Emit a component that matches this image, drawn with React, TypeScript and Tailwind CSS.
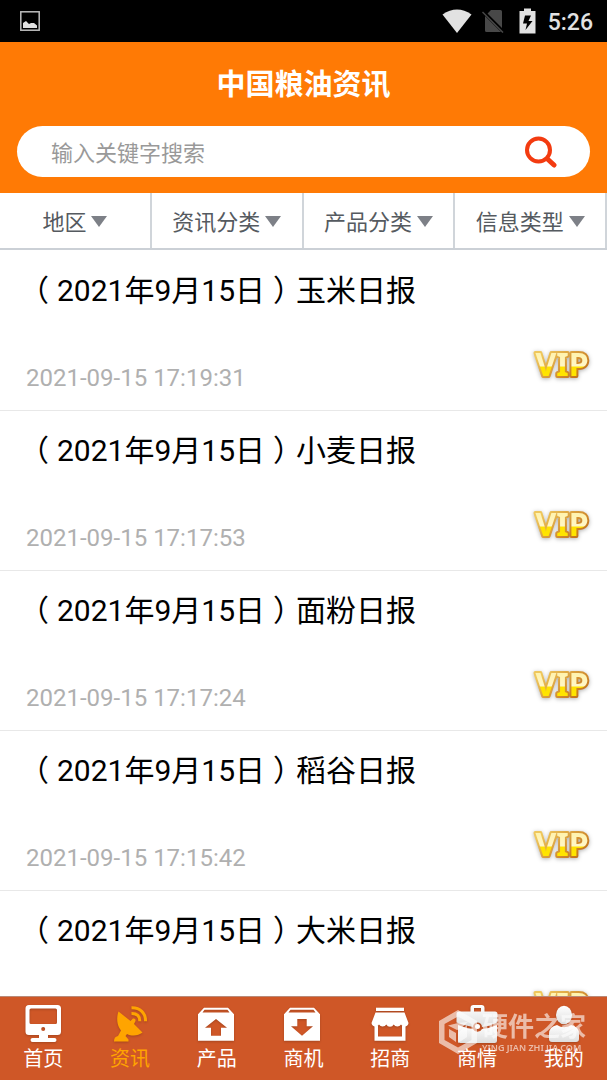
import type { ReactNode } from "react";

const FILTERS = ["地区", "资讯分类", "产品分类", "信息类型"];

const NEWS: { name: string; time?: string }[] = [
  { name: "玉米日报", time: "2021-09-15 17:19:31" },
  { name: "小麦日报", time: "2021-09-15 17:17:53" },
  { name: "面粉日报", time: "2021-09-15 17:17:24" },
  { name: "稻谷日报", time: "2021-09-15 17:15:42" },
  { name: "大米日报" },
];

const NAV: { label: string; icon: ReactNode; active?: boolean }[] = [
  {
    label: "首页",
    icon: (
      <>
        <path
          fillRule="evenodd"
          d="M6 2h28.500a3.500 3.500 0 0 1 3.500 3.500v23a3.500 3.500 0 0 1-3.500 3.500H6a3.500 3.500 0 0 1-3.500-3.500v-23A3.500 3.500 0 0 1 6 2zM8 5.500A1.500 1.500 0 0 0 6.500 7v12.500A1.500 1.500 0 0 0 8 21h24.500a1.500 1.500 0 0 0 1.500-1.500V7a1.500 1.500 0 0 0-1.500-1.500zM20.200 24a2 2 0 1 0 0 4 2 2 0 0 0 0-4z"
        />
        <path d="M16 32h9v3h6.500a2 2 0 0 1 0 4h-22a2 2 0 0 1 0-4H16z" />
      </>
    ),
  },
  {
    label: "资讯",
    active: true,
    icon: (
      <>
        <path d="M8.500 8.500 20.500 18 23 15.500a2 2 0 0 1 2.500 2.500L24 21l8.500 8.500C28 33 22 33.500 17 31l-1.500 2 3 3.500v2H4c0-3 1-5 4-5.500l3-5.500C6.500 22 6.500 14 8.500 8.500z" />
        <g fill="none" stroke="currentColor" strokeWidth="3">
          <path d="M21.500 4.800C30 4.500 35.800 10 35.500 18.200" />
          <path d="M21.500 10.400c5.500-.2 8.500 3 8.300 7.800" />
        </g>
      </>
    ),
  },
  {
    label: "产品",
    icon: (
      <path
        fillRule="evenodd"
        d="M7 4.700h24l6 6.600v26.400H1V11.300zM7.500 6.700 5.500 9.500h27l-2-2.800zM19 16 8 24.700h6v8h10v-8h6z"
      />
    ),
  },
  {
    label: "商机",
    icon: (
      <path
        fillRule="evenodd"
        d="M7 4.700h24l6 6.600v26.400H1V11.300zM7.500 6.700 5.500 9.500h27l-2-2.800zM14.300 16v7.300H8L19 32.700l11-9.400h-6.300V16z"
      />
    ),
  },
  {
    label: "招商",
    icon: (
      <>
        <path d="M6 4.700h28V8H6z" />
        <path d="M5.500 9.500h29l4 10.500a4 4 0 0 1-7.500 1.500 4.200 4.200 0 0 1-7.300 0 4.200 4.200 0 0 1-7.400 0 4.200 4.200 0 0 1-7.300 0A4 4 0 0 1 1.500 20z" />
        <path d="M4.500 23H8v10.500h24V23h3.500v14.700h-31z" />
      </>
    ),
  },
  {
    label: "商情",
    icon: (
      <>
        <path
          fill="url(#silver)"
          fillRule="evenodd"
          d="M13.500 8.500V5a3 3 0 0 1 3-3h8a3 3 0 0 1 3 3v3.500H38A2.500 2.500 0 0 1 40.500 11v8.500q-10 4-15.500 4.500a4.500 4.500 0 0 0-9 0Q8 23-.5 19.500V11A2.500 2.500 0 0 1 2 8.500zm3.500 0h7V5h-7z"
        />
        <path
          fill="url(#silver)"
          d="M1 22q8 3.500 15 4a5 5 0 0 0 9 0q7-.5 15-4v15.500a2.500 2.500 0 0 1-2.500 2.500h-34A2.500 2.500 0 0 1 1 37.500z"
        />
        <circle cx="20.500" cy="23.500" r="2.500" />
      </>
    ),
  },
  {
    label: "我的",
    icon: (
      <>
        <ellipse cx="20" cy="12" rx="8" ry="9.200" fill="url(#silver)" />
        <path
          fill="url(#silver)"
          d="M13 22q7 4.500 14 0 8 1.500 8 9v5a3 3 0 0 1-3 3H8a3 3 0 0 1-3-3v-5q0-7.500 8-9z"
        />
      </>
    ),
  },
];

function StatusBar() {
  return (
    <div className="flex h-[42px] shrink-0 items-center bg-black pr-[14px] pl-5 text-[#e2e2e2]">
      <svg className="h-5 w-5" viewBox="0 0 20 20">
        <rect x=".8" y=".8" width="18.400" height="18.400" fill="none" stroke="#bdbdbd" strokeWidth="1.500" />
        <path fill="currentColor" d="M3 17v-5l3-2 3 3 2-1 3 0 3 2.500V17z" />
      </svg>
      <svg className="ml-auto h-6 w-[30px]" viewBox="0 0 30 24">
        <path fill="currentColor" d="M.5 5.500q14.500-10 29 0L15 24z" />
      </svg>
      <svg className="ml-[10px] h-6 w-[22px]" viewBox="0 0 22 24">
        <path fill="#484848" d="M9 1h9.500A1.500 1.500 0 0 1 20 2.500V19L5.500 4.500zM3 7l16 16H4.500A1.500 1.500 0 0 1 3 21.500z" />
        <path stroke="#484848" strokeWidth="1.500" d="m.5 3 20.500 20.500" />
      </svg>
      <svg className="ml-[15px] h-[26px] w-[17px]" viewBox="0 0 17 26">
        <path
          fill="currentColor"
          fillRule="evenodd"
          d="M5 .5h7V3h4.500v22.500H.5V3H5zM6 7.500 4 15.500h4L6.500 22 13.500 13H9.500l2.500-5.500z"
        />
      </svg>
      <span className="ml-3 pt-1 font-[Roboto] text-[23px] font-medium">5:26</span>
    </div>
  );
}

function Header() {
  return (
    <header className="shrink-0 bg-[#ff7a05] px-[17px] pb-4">
      <h1 className="flex h-[84px] items-center justify-center pt-1 text-[29px] font-bold text-white">中国粮油资讯</h1>
      <form className="flex h-[51px] items-center rounded-full bg-white pr-[33px] pl-[34px]">
        <input
          type="search"
          aria-label="输入关键字搜索"
          placeholder="输入关键字搜索"
          className="min-w-0 flex-1 pt-1 text-[22px] outline-none placeholder:text-[#999]"
        />
        <button type="button" aria-label="搜索">
          <svg className="h-8 w-8" viewBox="0 0 32 32" fill="none" stroke="#f33b10">
            <circle cx="13.500" cy="14" r="11.500" strokeWidth="4" />
            <path d="m23 23.500 6 5.500" strokeWidth="5" strokeLinecap="round" />
          </svg>
        </button>
      </form>
    </header>
  );
}

function Filters() {
  return (
    <div className="grid h-[57px] shrink-0 grid-cols-4 border-b-2 border-[#cbd0d6]">
      {FILTERS.map((f) => (
        <label key={f} className="flex items-center justify-center gap-1 border-r-2 border-[#d0d5da] pt-[2px]">
          <select aria-label={f} className="appearance-none pt-[2px] text-[22px] text-[#555a60] outline-none">
            <option>{f}</option>
          </select>
          <svg className="h-[11px] w-4" viewBox="0 0 16 11">
            <path fill="#7d8087" d="M0 0h16L8 11z" />
          </svg>
        </label>
      ))}
    </div>
  );
}

function VipBadge() {
  return (
    <svg className="ml-auto h-8 w-[60px] overflow-visible drop-shadow-[0_1px_2px_rgba(0,0,0,0.3)]" viewBox="0 0 60 32">
      <text
        x="31"
        y="26"
        textAnchor="middle"
        fill="url(#gold)"
        stroke="url(#goldEdge)"
        strokeWidth="4"
        strokeLinejoin="round"
        paintOrder="stroke"
        className="font-['Noto_Sans'] text-[32px] font-bold"
      >
        VIP
      </text>
    </svg>
  );
}

function NewsItem({ name, time }: { name: string; time?: string }) {
  return (
    <li className="h-40 border-b border-[#e8e8e8] pt-5 pr-4 pl-[26px]">
      <a href="#" className="block">
        <h2 className="text-[30px] leading-10 text-black">
          <span className="px-2 [font-feature-settings:'halt']">（</span>2021年9月15日
          <span className="px-2 [font-feature-settings:'halt']">）</span>
          {name}
        </h2>
        <div className="mt-[39px] flex items-start">
          {time && <time className="pt-3 text-2xl text-[#b0b0b0]">{time}</time>}
          <VipBadge />
        </div>
      </a>
    </li>
  );
}

function Watermark() {
  return (
    <div className="pointer-events-none absolute right-[21px] bottom-[26px] flex items-center gap-[5px] text-white opacity-60">
      <svg className="h-[44px] w-[38px]" viewBox="0 0 38 44" fill="currentColor">
        <path
          fillRule="evenodd"
          d="M19 0 38 11v22L19 44 0 33V11zM19 6.500 5.500 14v16L19 37.500 32.500 30V14z"
        />
        <path d="M9 15.500 19 13l10-1-8 7-3 1zM10 19l7 4v9l-7-5zM28 15v12l-9 6V23z" />
      </svg>
      <div>
        <p className="text-[26px] leading-8 font-bold">硬件之家</p>
        <p className="font-['Noto_Sans'] text-[9px] leading-[10px] font-semibold">YING JIAN ZHI JIA.COM</p>
      </div>
    </div>
  );
}

function TabBar() {
  return (
    <nav className="relative grid shrink-0 grid-cols-7 border-t border-[#b98a78] bg-[#cf5727]">
      {NAV.map((n) => (
        <a
          key={n.label}
          href="#"
          className={`flex flex-col items-center pt-[6px] pb-[5px] ${n.active ? "text-[#ffa400]" : "text-white"}`}
        >
          <svg className="h-10 w-10 overflow-visible drop-shadow-[0_1px_1px_rgba(0,0,0,0.2)]" viewBox="0 0 40 40" fill="currentColor">
            {n.icon}
          </svg>
          <span className="text-xl leading-8">{n.label}</span>
        </a>
      ))}
      <Watermark />
    </nav>
  );
}

export default function App() {
  return (
    <div className="flex h-screen flex-col bg-white font-[Roboto,'Noto_Sans_CJK_SC',sans-serif]">
      {/* shared gradients */}
      <svg className="absolute h-0 w-0" aria-hidden="true">
        <defs>
          <linearGradient id="gold" x1="0" y1="0" x2="0" y2="1">
            <stop offset=".3" stopColor="#fff3b0" />
            <stop offset=".56" stopColor="#fff6c8" />
            <stop offset=".58" stopColor="#ffe100" />
            <stop offset=".8" stopColor="#ffe600" />
          </linearGradient>
          <linearGradient id="goldEdge" x1="0" y1="0" x2="1" y2="1">
            <stop offset=".2" stopColor="#efc75c" />
            <stop offset=".8" stopColor="#c4741c" />
          </linearGradient>
          <linearGradient id="silver" x1="0" y1="0" x2="0" y2="1">
            <stop offset="0" stopColor="#ffffff" />
            <stop offset="1" stopColor="#dedede" />
          </linearGradient>
        </defs>
      </svg>
      <StatusBar />
      <Header />
      <Filters />
      <ul className="min-h-0 flex-1 overflow-hidden pt-px">
        {NEWS.map((n) => (
          <NewsItem key={n.name} name={n.name} time={n.time} />
        ))}
      </ul>
      <TabBar />
    </div>
  );
}
